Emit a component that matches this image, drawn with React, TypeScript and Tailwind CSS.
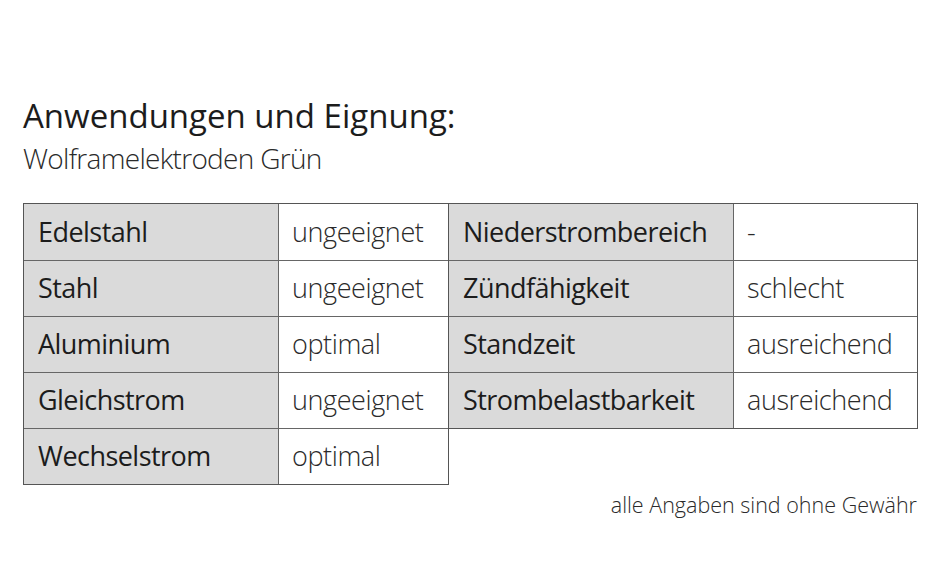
const left = [
  ['Edelstahl', 'ungeeignet'],
  ['Stahl', 'ungeeignet'],
  ['Aluminium', 'optimal'],
  ['Gleichstrom', 'ungeeignet'],
  ['Wechselstrom', 'optimal'],
];

const right = [
  ['Niederstrombereich', '-'],
  ['Zündfähigkeit', 'schlecht'],
  ['Standzeit', 'ausreichend'],
  ['Strombelastbarkeit', 'ausreichend'],
];

const Table = ({ rows, labelW, valueW, first }: { rows: string[][]; labelW: string; valueW: string; first?: boolean }) => (
  <div className={`flex flex-col border-y border-r border-[#555] ${first ? 'border-l' : ''}`}>
    {rows.map(([label, value], i) => (
      <div key={label} className={`flex h-[56px] ${i > 0 ? 'border-t border-[#666]' : ''}`}>
        <div className={`${labelW} flex items-center bg-[#dadada] border-r border-[#666] pl-[14px] text-[27px] tracking-[-0.02em] text-[#1c1c1c]`}>
          {label}
        </div>
        <div className={`${valueW} flex items-center bg-white pl-[13px] text-[27px] font-light tracking-[-0.015em] text-[#2a2a2a]`}>
          {value}
        </div>
      </div>
    ))}
  </div>
);

export default function App() {
  return (
    <div
      className="w-[940px] h-[587px] bg-white overflow-hidden pl-[23px] pt-[94px]"
      style={{ fontFamily: '"Open Sans", "Noto Sans", sans-serif' }}
    >
      <h1 className="text-[33px] leading-[44px] text-[#1c1c1c]">Anwendungen und Eignung:</h1>
      <p className="text-[28px] leading-[40px] font-light tracking-[-0.025em] text-[#2a2a2a]">Wolframelektroden Grün</p>

      <div className="mt-[25px] flex items-start">
        <Table rows={left} labelW="w-[255px]" valueW="w-[169px]" first />
        <Table rows={right} labelW="w-[285px]" valueW="w-[183px]" />
      </div>

      <p className="w-[894px] text-right text-[21.5px] font-light text-[#2a2a2a] mt-[4px]">alle Angaben sind ohne Gewähr</p>
    </div>
  );
}
